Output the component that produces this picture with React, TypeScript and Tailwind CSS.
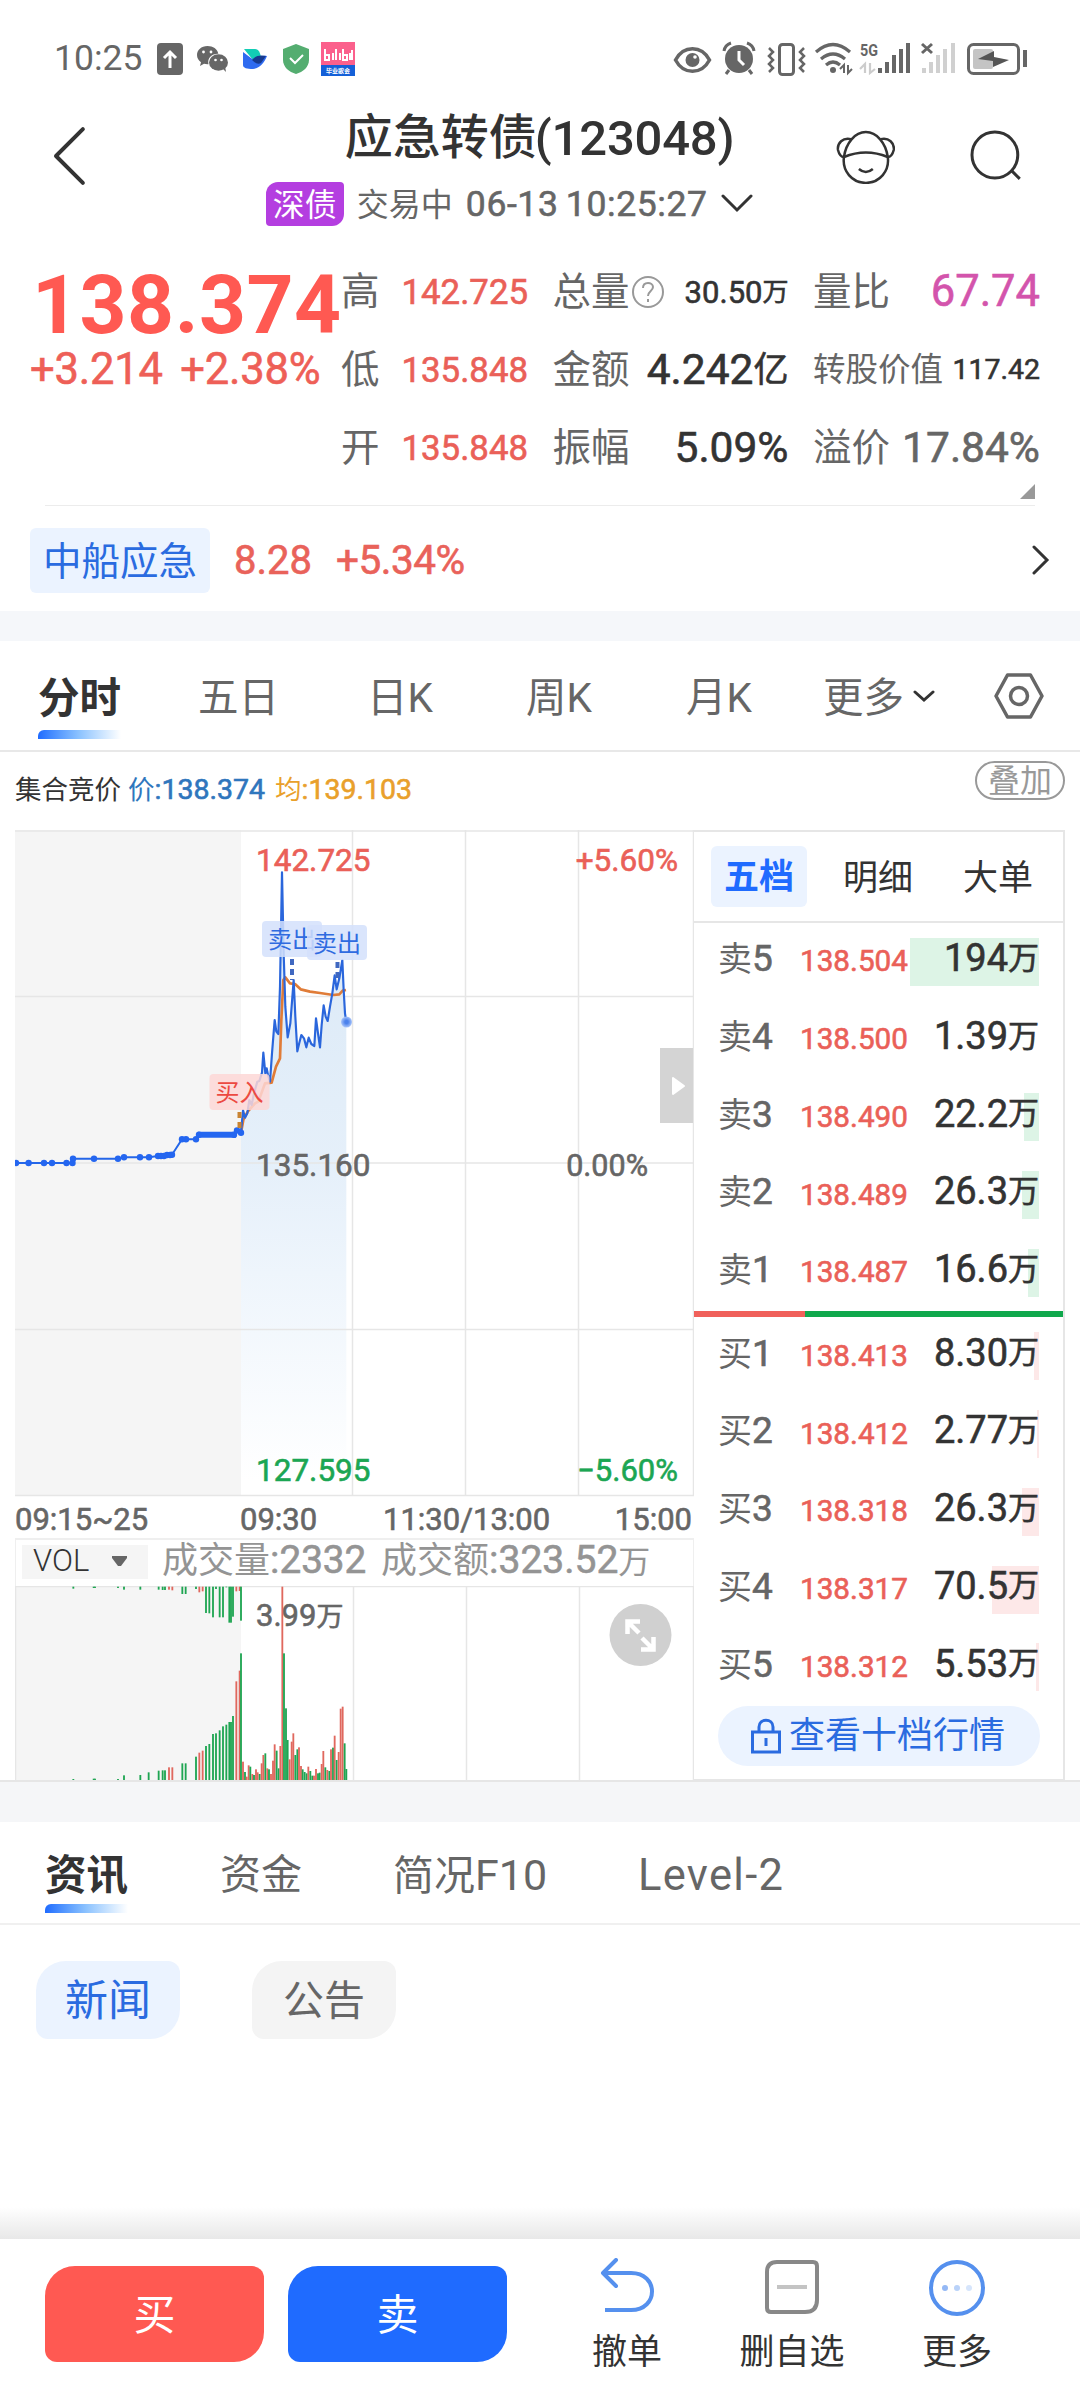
import { clsx } from "clsx";

type Level = { name: string; price: string; volume: string; unit: string; bar: number };
type Bar = [x: number, y: number, color: "r" | "g"];

const sells: Level[] = [
  { name: "卖5", price: "138.504", volume: "194", unit: "万", bar: 129 },
  { name: "卖4", price: "138.500", volume: "1.39", unit: "万", bar: 0 },
  { name: "卖3", price: "138.490", volume: "22.2", unit: "万", bar: 15 },
  { name: "卖2", price: "138.489", volume: "26.3", unit: "万", bar: 17 },
  { name: "卖1", price: "138.487", volume: "16.6", unit: "万", bar: 11 },
];

const buys: Level[] = [
  { name: "买1", price: "138.413", volume: "8.30", unit: "万", bar: 5 },
  { name: "买2", price: "138.412", volume: "2.77", unit: "万", bar: 2 },
  { name: "买3", price: "138.318", volume: "26.3", unit: "万", bar: 17 },
  { name: "买4", price: "138.317", volume: "70.5", unit: "万", bar: 47 },
  { name: "买5", price: "138.312", volume: "5.53", unit: "万", bar: 3 },
];

// thickens the regular digits slightly, between the regular and medium cuts
const semi = "[-webkit-text-stroke:0.6px_currentColor]";

const pricePoints =
  "183,938 189,870 195,893 202,880 208,840 215,855 222,820 232,785 238,783 246,758 250,698 256,760 260,745 264,765 270,785 276,700 284,600 289,635 295,642 300,500 306,157 311,400 316,560 323,652 331,610 341,480 346,590 352,694 358,668 364,645 372,655 379,682 386,653 394,672 403,678 408,595 414,640 420,682 425,615 431,556 437,590 443,603 450,560 457,520 464,466 470,508 478,475 487,420 491,510 495,580 499,606";
const averagePoints =
  "183,938 190,900 203,875 225,850 235,845 255,790 275,788 288,740 300,715 304,600 310,480 316,472 330,490 345,492 362,508 390,515 420,519 460,525 478,523 488,512 498,510";

const auctionDots: [number, number][] = [
  [16, 1163], [28.6, 1163], [44, 1163], [52, 1163], [66.5, 1163], [72.5, 1163],
  [73, 1158.7], [94, 1158.7], [118, 1158.7], [124, 1157.3], [140, 1157.3], [149, 1157.3],
  [158, 1156], [161, 1156], [164, 1156], [167, 1155], [170, 1155], [172, 1154.7],
  [182, 1139.3], [186, 1139.3], [196, 1139.3], [199, 1134.8], [234, 1134.8], [237, 1130.5], [241, 1132.7],
];

const volumeBars: Bar[] = [
  [220, 867, "g"], [281, 866, "g"], [285, 866, "g"], [354, 867, "g"], [372, 856, "g"], [421, 855, "g"],
  [446, 847, "g"], [476, 842, "g"], [488, 841, "g"], [495, 841, "g"], [507, 832, "r"], [517, 832, "r"],
  [547, 820, "g"], [557, 820, "g"], [588, 800, "g"], [598, 788, "r"], [608, 782, "r"], [618, 768, "g"],
  [628, 762, "g"], [639, 732, "g"], [648, 730, "g"], [659, 721, "g"], [669, 709, "g"], [679, 704, "g"],
  [688, 696, "g"], [693, 696, "g"], [699, 678, "g"], [709, 574, "r"], [719, 542, "r"], [723, 490, "g"],
  [729, 815, "r"], [735, 846, "g"], [740, 860, "r"], [746, 826, "r"], [751, 830, "g"], [757, 852, "r"],
  [762, 855, "g"], [768, 838, "r"], [773, 847, "r"], [779, 852, "g"], [785, 820, "r"], [790, 795, "r"],
  [796, 790, "g"], [802, 835, "r"], [807, 838, "g"], [813, 852, "r"], [819, 812, "r"], [824, 763, "r"],
  [830, 782, "g"], [836, 835, "g"], [841, 768, "r"], [847, 290, "r"], [852, 490, "g"], [858, 655, "g"],
  [863, 750, "g"], [869, 808, "r"], [875, 755, "r"], [880, 730, "r"], [886, 795, "g"], [892, 778, "g"],
  [897, 772, "r"], [903, 828, "r"], [908, 838, "g"], [914, 846, "g"], [920, 850, "g"], [925, 830, "r"],
  [931, 843, "g"], [937, 857, "g"], [942, 857, "r"], [948, 837, "r"], [954, 850, "g"], [959, 848, "g"],
  [965, 822, "r"], [970, 783, "r"], [976, 832, "g"], [982, 840, "r"], [988, 843, "g"], [993, 778, "r"],
  [999, 773, "g"], [1004, 737, "r"], [1010, 810, "g"], [1016, 786, "r"], [1022, 656, "r"], [1028, 650, "r"],
  [1034, 760, "g"], [1039, 837, "g"],
];

const hangingBars: Bar[] = [
  [220, 296, "g"], [281, 294, "g"], [285, 294, "g"], [354, 294, "g"], [372, 299, "g"], [421, 299, "g"],
  [476, 299, "g"], [488, 300, "g"], [495, 300, "g"], [507, 299, "r"], [517, 301, "r"], [547, 312, "g"],
  [557, 312, "g"], [588, 297, "g"], [598, 307, "r"], [608, 304, "r"], [618, 369, "g"], [628, 370, "g"],
  [639, 382, "g"], [648, 297, "g"], [659, 382, "g"], [669, 382, "g"], [679, 292, "g"], [688, 398, "g"],
  [693, 398, "g"], [699, 380, "g"], [709, 304, "r"], [719, 303, "r"], [723, 392, "g"],
];

function StatusBar() {
  return (
    <div className="flex h-[118px] items-center pl-[54px] pr-[53px] text-[#666]">
      <span className="w-[103px] text-[35.500px] leading-none">10:25</span>
      <svg className="h-8 w-[26px]" viewBox="0 0 26 32">
        <rect width="26" height="32" rx="4" fill="#666" />
        <path d="M13 25V9M7 15l6-6 6 6" fill="none" stroke="#fff" strokeWidth="3" />
      </svg>
      <svg className="ml-[13px] h-[28px] w-[33px]" viewBox="0 0 33 28" fill="#666">
        <path d="M11.500 1C5.200 1 1 5 1 10c0 3 1.500 5.500 4 7.200L4 21l4-2.200c1.500.4 3 .5 4.500.4C11 13 16 8.500 22.300 8.800 21.500 4 17 1 11.500 1z" />
        <ellipse cx="22.500" cy="17.500" rx="9.500" ry="8.200" />
        <path d="M26 23l4 4-1-6z" />
        <g fill="#fff">
          <circle cx="7.500" cy="7" r="1.400" />
          <circle cx="15" cy="7" r="1.400" />
          <circle cx="19.500" cy="15" r="1.300" />
          <circle cx="25.500" cy="15" r="1.300" />
        </g>
      </svg>
      <svg className="ml-[14px] h-[20px] w-[24px]" viewBox="0 0 24 20">
        <path d="M1 0h11c4 0 5 4 6 8l-8 3z" fill="#12cdb5" />
        <path d="M0 3l12 9c3-5 7-6 12-5-3 7-7 12-14 13C4 20 0 19 0 16z" fill="#2f6bf0" />
        <path d="M9 11c4-5 9-5 14-4l-5 7c-3 2-6 0-9-3z" fill="#173a8f" />
      </svg>
      <svg className="ml-[16px] h-[30px] w-[26px]" viewBox="0 0 26 30">
        <path d="M13 0l13 5v11c0 7-6 12-13 14C6 28 0 23 0 16V5z" fill="#54ad70" />
        <path d="M7 14l5 5 8-8" fill="none" stroke="#fff" strokeWidth="2" />
      </svg>
      <div className="ml-[12px] flex h-[34px] w-[34px] flex-col overflow-hidden bg-[#fb608c] text-white">
        <svg className="h-[23px] w-[34px]" viewBox="0 0 34 23" fill="none" stroke="#fff" strokeWidth="2">
          <path d="M4 7v11h4v-5H4M12 11v7M15 7v11M19 11v7M22 7v11h4v-5h-4M29 11v7M31 8v10" />
        </svg>
        <div className="flex flex-1 items-center justify-center bg-[#1460d8] text-[6px] font-bold leading-none">毕业歌会</div>
      </div>

      <svg className="ml-auto h-[36px] w-[354px]" viewBox="674 42 354 36" fill="none" stroke="#666">
        <path d="M676.500 61c8-15 26-15 34 0-8 15-26 15-34 0z" strokeWidth="3.500" />
        <circle cx="693.500" cy="61" r="7" fill="#666" stroke="none" />
        <circle cx="696" cy="58" r="1.800" fill="#fff" stroke="none" />
        <circle cx="740" cy="60" r="14" fill="#666" stroke="none" />
        <path d="M725 52q1-6 7-8M755 52q-1-6-7-8M730 71l-3 4M750 71l3 4" strokeWidth="3" />
        <path d="M740 52v9l5 5" stroke="#fff" strokeWidth="3" />
        <rect x="780.500" y="45.500" width="14" height="30" rx="3" strokeWidth="3" />
        <path d="M770 49l4 4-4 4 4 4-4 4 4 4-4 4M805 49l-4 4 4 4-4 4 4 4-4 4 4 4" strokeWidth="2.500" />
        <path d="M817 53q17-15 34 0M822 60q12-10 24 0M827 66q7-6 14 0" strokeWidth="3.200" />
        <circle cx="834" cy="71" r="3" fill="#666" stroke="none" />
        <path d="M841 70l4-4v8M849 66v8l4-4" strokeWidth="2" />
        <path d="M861 70l5-5v9M871 64v10l5-4" stroke="#ccc" strokeWidth="2.200" />
        <path d="M881 69v5M888 63v11M895 56v18M902 50v24M909 44v30" strokeWidth="4" />
        <path d="M923 45l10 9M933 45l-10 9" strokeWidth="3" />
        <path d="M925 69v5M932 63v11M939 56v18M946 50v24M954 44v30" stroke="#d0d0d0" strokeWidth="4" />
        <rect x="969.500" y="45.500" width="50" height="29" rx="5" strokeWidth="3" />
        <rect x="974" y="50" width="20" height="20" rx="2" fill="#c4c4c4" stroke="none" />
        <path d="M1026 51v17" strokeWidth="4" />
        <path d="M979 60l16-8v6l15 3-16 7v-6z" fill="#555" stroke="none" />
        <text x="861" y="57" fontSize="17" fontWeight="700" textLength="18" lengthAdjust="spacingAndGlyphs" fill="#666" stroke="none">
          5G
        </text>
      </svg>
    </div>
  );
}

function Header() {
  return (
    <header className="flex h-[122px] pl-[53px] pr-[56px]">
      <svg className="mt-[8px] h-[60px] w-[34px]" viewBox="0 0 34 60" fill="none" stroke="#333" strokeWidth="4" strokeLinecap="round" strokeLinejoin="round">
        <path d="M30 3L3 30l27 27" />
      </svg>
      <div className="ml-[179px] w-[490px]">
        <h1 className="ml-[79px] flex h-[40px] items-center whitespace-nowrap text-[48px] font-medium leading-none text-[#333]">
          应急转债<span className="-ml-[2px] text-[49px] tracking-[-0.2px]">(123048)</span>
        </h1>
        <div className="mt-[24px] flex h-[44px] items-center text-[32px] leading-none text-[#666]">
          <span className="flex h-[44px] w-[78px] items-center justify-center rounded-[4px] rounded-br-[12px] rounded-tl-[12px] bg-[#b43ee0] pt-[2px] text-white">
            深债
          </span>
          <span className="ml-[13px] w-[109px] pt-[2px]">交易中</span>
          <span className={clsx("w-[241px] whitespace-nowrap pt-[2px] text-[35.500px] tracking-[0.600px] [word-spacing:-2px]", semi)}>06-13 10:25:27</span>
          <svg className="ml-[14px] h-[20px] w-[32px]" viewBox="0 0 32 20" fill="none" stroke="#333" strokeWidth="3" strokeLinecap="round">
            <path d="M2 2l14 14L30 2" />
          </svg>
        </div>
      </div>
      <svg className="ml-[82px] mt-[12px] h-[54px] w-[60px]" viewBox="0 0 60 54" fill="none" stroke="#333" strokeWidth="2.500">
        <path d="M8 27C10 13 19 2 30 2s20 11 22 25" />
        <path d="M8 27q22-9 44 0c2 14-8 26-22 26S6 41 8 27z" />
        <path d="M15 9C7 7 1 13 2 20c1 4 3 7 6 7M45 9c8-2 14 4 13 11-1 4-3 7-6 7M23 39q7 6 14 0" />
      </svg>
      <svg className="ml-[75px] mt-[10px] h-[54px] w-[54px]" viewBox="0 0 54 54" fill="none" stroke="#333" strokeWidth="3">
        <circle cx="25" cy="27" r="23" />
        <path d="M42 43l8 8" />
      </svg>
    </header>
  );
}

function Stat({ label, value, className, labelClass }: { label: string; value: React.ReactNode; className?: string; labelClass?: string }) {
  return (
    <div className="flex items-center justify-between whitespace-nowrap">
      <span className={clsx("text-[#666]", labelClass ?? "text-[38.500px]")}>{label}</span>
      <span className={clsx("flex items-center", semi, className)}>{value}</span>
    </div>
  );
}

function Quote() {
  return (
    <section className="relative ml-[30px] mr-[40px] flex h-[266px] pt-[13px] leading-none">
      <div className="w-[311px] text-[#ff5952]">
        <div className="mt-[14px] h-[76px] pl-[2px] text-[82px] font-bold leading-[76px] tracking-[0.500px]">138.374</div>
        <div className={clsx("mt-[5px] h-[44px] whitespace-nowrap text-[43.500px] leading-[44px] tracking-[-0.2px] text-[#ee5f57] [word-spacing:7px]", semi)}>
          +3.214 +2.38%
        </div>
      </div>
      <div className="grid h-[234px] w-[699px] grid-cols-[187px_236px_227px] grid-rows-3 justify-between">
        <Stat label="高" value="142.725" className="text-[34.800px] text-[#ea6058]" />
        <div className="flex items-center whitespace-nowrap">
          <span className="text-[38.500px] text-[#666]">总量</span>
          <svg className="ml-[2px] size-[32px]" viewBox="0 0 32 32" fill="none" stroke="#999" strokeWidth="2">
            <circle cx="16" cy="16" r="15" />
            <path d="M11 12c0-7 10-6 10-1 0 4-5 4-5 9M16 23v3" />
          </svg>
          <span className={clsx("ml-auto flex items-center text-[31px] text-[#333]", semi)}>
            30.50<span className="text-[26px]">万</span>
          </span>
        </div>
        <Stat label="量比" value="67.74" className="text-[43.500px] text-[#d354ac]" />
        <Stat label="低" value="135.848" className="text-[34.800px] text-[#ea6058]" />
        <Stat label="金额" value={<>4.242<span className="text-[35px]">亿</span></>} className="text-[42.500px] text-[#333]" />
        <Stat label="转股价值" value="117.42" labelClass="text-[32.500px]" className="text-[28.500px] text-[#333]" />
        <Stat label="开" value="135.848" className="text-[34.800px] text-[#ea6058]" />
        <Stat label="振幅" value="5.09%" className="text-[42.500px] text-[#333]" />
        <Stat label="溢价" value="17.84%" className="text-[42.500px] text-[#666]" />
      </div>
      <svg className="absolute right-[5px] top-[244px] size-[15px]" viewBox="0 0 15 15">
        <path d="M15 0v15H0z" fill="#999" />
      </svg>
    </section>
  );
}

function RelatedStock() {
  return (
    <div className="flex h-[105px] items-center pl-[30px] pr-[30px] leading-none">
      <span className="mt-1 flex h-[65px] w-[180px] items-center justify-center rounded-[6px] bg-[#ebf3ff] pt-[3px] text-[38.500px] text-[#2a6be0]">中船应急</span>
      <span className={clsx("ml-[24px] w-[102px] pt-[4px] text-[40px] text-[#e9625a]", semi)}>8.28</span>
      <span className={clsx("pt-[4px] text-[40.500px] tracking-[-0.5px] text-[#e9625a]", semi)}>+5.34%</span>
      <svg className="ml-auto mt-[2px] h-[30px] w-[18px]" viewBox="0 0 18 30" fill="none" stroke="#333" strokeWidth="3" strokeLinecap="round">
        <path d="M2 2l13 13L2 28" />
      </svg>
    </div>
  );
}

function PeriodTabs() {
  return (
    <nav className="flex h-[111px] items-center border-b-2 border-[#e8e8e8] pl-[38px] pt-[6px] text-[40.500px] leading-none text-[#666]">
      <div className="relative w-[160px] text-[41.500px] font-bold text-[#333]">
        分时
        <div className="absolute left-0 top-[52px] h-[9px] w-[83px] rounded-tl-[6px] bg-gradient-to-r from-[#1f6bff] via-[#8dc3ff] to-white" />
      </div>
      <span className="w-[169px]">五日</span>
      <span className="w-[159px]">日K</span>
      <span className="w-[160px]">周K</span>
      <span className="w-[137px]">月K</span>
      <span className="flex w-[170px] items-center">
        更多
        <svg className="-mt-[6px] ml-[9px] h-[12px] w-[22px]" viewBox="0 0 22 12" fill="none" stroke="#333" strokeWidth="3" strokeLinecap="round">
          <path d="M2 2l9 8 9-8" />
        </svg>
      </span>
      <svg className="-mt-[6px] ml-[1px] h-[46px] w-[50px]" viewBox="0 0 50 46" fill="none" stroke="#666" strokeWidth="3.500">
        <path d="M13.500 2h23L48 23 36.500 44h-23L2 23z" strokeLinejoin="round" />
        <circle cx="25" cy="23" r="8.500" />
      </svg>
    </nav>
  );
}

function PriceChart() {
  return (
    <svg className="block h-[667px] w-[679px]" viewBox="15 830 679 667">
      <defs>
        <linearGradient id="area" x1="0" y1="870" x2="0" y2="1480" gradientUnits="userSpaceOnUse">
          <stop offset="0" stopColor="#d9e8f6" />
          <stop offset="0.500" stopColor="#e6f0fa" />
          <stop offset="0.660" stopColor="#eef5fc" />
          <stop offset="1" stopColor="#fff" />
        </linearGradient>
        <radialGradient id="glow">
          <stop offset="0.300" stopColor="#4c82ec" />
          <stop offset="1" stopColor="#a9c5fa" />
        </radialGradient>
        <clipPath id="under">
          <polygon transform="translate(180 820) scale(.33333)" points={`183,2020 ${pricePoints} 499,2020`} />
        </clipPath>
      </defs>
      <rect x="15" y="830" width="226" height="666" fill="#f5f5f5" />
      <rect x="241" y="860" width="106" height="634" fill="url(#area)" clipPath="url(#under)" />
      <path d="M15 831H694M15 996.500H694M15 1163H694M15 1329.500H694M15 1495.500H694M352.500 830V1496M465.500 830V1496M578.500 830V1496M693.500 830V1496" stroke="#e6e6e6" strokeWidth="1.500" fill="none" />
      <g fontSize="31.500" strokeWidth="0.600">
        <text x="256" y="871" fill="#ea6058" stroke="#ea6058">142.725</text>
        <text x="678" y="871" textAnchor="end" fill="#ea6058" stroke="#ea6058">+5.60%</text>
        <text x="256" y="1176" fill="#666" stroke="#666">135.160</text>
        <text x="648" y="1176" textAnchor="end" fontSize="30.500" fill="#666" stroke="#666">0.00%</text>
        <text x="256" y="1481" fill="#1ba653" stroke="#1ba653">127.595</text>
        <text x="678" y="1481" textAnchor="end" fontSize="31" fill="#1ba653" stroke="#1ba653">−5.60%</text>
      </g>
      <g fill="none" strokeLinejoin="round" transform="translate(180 820) scale(.33333)">
        <polyline points={averagePoints} stroke="#e07c38" strokeWidth="8" />
        <polyline points={pricePoints} stroke="#2a66dc" strokeWidth="6.500" />
      </g>
      <polyline points={auctionDots.map((p) => p.join(",")).join(" ")} fill="none" stroke="#2466e8" strokeWidth="2" />
      <path d="M198 1134.800H236" stroke="#2466f0" strokeWidth="6" />
      {auctionDots.map(([x, y]) => (
        <circle key={`${x}-${y}`} cx={x} cy={y} r="3.200" fill="#2466f0" />
      ))}
      <path d="M292 959v21M337.500 962v18" stroke="#4068c0" strokeWidth="4" strokeDasharray="6 4" />
      <path d="M239.500 1112v20" stroke="#c98433" strokeWidth="4" strokeDasharray="6 4" />
      <circle cx="346.500" cy="1022" r="5.500" fill="url(#glow)" />
      <g fontSize="24">
        <rect x="262" y="921" width="60" height="36" rx="4" fill="#d3e1fc" fillOpacity="0.850" />
        <text x="268" y="948" fill="#2f6be0">卖出</text>
        <rect x="307" y="925" width="60" height="35" rx="4" fill="#d3e1fc" fillOpacity="0.850" />
        <text x="313" y="952" fill="#2f6be0">卖出</text>
        <rect x="209.500" y="1074" width="60" height="36" rx="4" fill="#fdd7d6" fillOpacity="0.850" />
        <text x="215.500" y="1101" fill="#ec4a42">买入</text>
      </g>
      <rect x="660" y="1048" width="33" height="75" fill="#d4d4d4" />
      <path d="M673 1078l11 8-11 8z" fill="#fff" stroke="#fff" strokeWidth="2" strokeLinejoin="round" />
    </svg>
  );
}

function VolumeChart() {
  return (
    <svg className="block h-[194px] w-[679px]" viewBox="15 1586 679 194">
      <rect x="15" y="1586" width="226" height="194" fill="#f5f5f5" />
      <path d="M15.500 1586V1780M353.500 1586V1780M466.500 1586V1780M579.500 1586V1780M693.500 1586V1780M15 1586.500H694" stroke="#e6e6e6" strokeWidth="1.500" />
      <text x="256" y="1626" fontSize="31" fill="#666" stroke="#666" strokeWidth="0.600">3.99<tspan fontSize="27">万</tspan></text>
      <g transform="translate(0 1490) scale(.33333)">
        {volumeBars.map(([x, y, c]) => (
          <rect key={x} x={x - 2.75} y={y} width="5.500" height={870 - y} fill={c === "r" ? "#e0685e" : "#1fa552"} />
        ))}
        {hangingBars.map(([x, y, c]) => (
          <rect key={x} x={x - 2.75} y="290" width="5.500" height={y - 290} fill={c === "r" ? "#e0685e" : "#1fa552"} />
        ))}
      </g>
      <circle cx="640.500" cy="1635" r="31" fill="#d0d0d0" />
      <path d="M639 1633l-11-11M627.500 1634v-12.500h12.500M642 1638l11 11M653.500 1637v12.500h-12.500" fill="none" stroke="#fff" strokeWidth="4.500" />
    </svg>
  );
}

function ChartPanel() {
  return (
    <div className="w-[679px]">
      <PriceChart />
      <div className={clsx("flex h-[41px] items-center whitespace-nowrap pr-[2px] pt-[3px] text-[31px] leading-none text-[#666]", semi)}>
        <span className="w-[225px]">09:15~25</span>
        <span className="w-[143px]">09:30</span>
        <span className="w-[170px]">11:30/13:00</span>
        <span className="ml-auto">15:00</span>
      </div>
      <div className="flex h-[48px] items-center whitespace-nowrap border-x border-t-2 border-[#efefef] pb-[5px] text-[36px] leading-none text-[#949494]">
        <span className="ml-[6px] mt-[3px] flex h-[34px] w-[126px] items-center bg-[#f5f5f5] pb-[4px] pl-[11px] text-[31px] font-light text-[#333]">
          VOL
          <svg className="ml-[22px] mt-[3px] h-[11px] w-[17px]" viewBox="0 0 17 11">
            <path d="M1 0h15v2l-6 8H7L1 2z" fill="#666" />
          </svg>
        </span>
        <span className="ml-[14px] w-[219px]">
          成交量<span className={clsx("text-[38.700px]", semi)}>:2332</span>
        </span>
        <span>
          成交额<span className={clsx("text-[39px]", semi)}>:323.52</span>
          <span className="text-[32px]">万</span>
        </span>
      </div>
      <VolumeChart />
    </div>
  );
}

function LevelRow({ level, side }: { level: Level; side: "sell" | "buy" }) {
  return (
    <div className="relative flex h-[77.700px] items-center whitespace-nowrap pl-[24px] pr-[24px] leading-none">
      <div
        className={clsx("absolute right-[24px] top-[15px] h-[48px]", side === "sell" ? "bg-[#ddf4e6]" : "bg-[#fde8e8]")}
        style={{ width: level.bar }}
      />
      <span className="relative w-[82px] pb-[6px] text-[34px] text-[#666]">
        {level.name[0]}
        <span className={clsx("text-[37px]", semi)}>{level.name[1]}</span>
      </span>
      <span className={clsx("relative pb-[1px] text-[29.700px] text-[#ea6058]", semi)}>{level.price}</span>
      <span className={clsx("relative ml-auto flex items-center pb-[7px] text-[38px] text-[#333]", semi)}>
        {level.volume}
        <span className="text-[31px]">{level.unit}</span>
      </span>
    </div>
  );
}

function OrderBook() {
  return (
    <div className="h-[951px] w-[371px] border-2 border-l-0 border-[#e6e6e6]">
      <div className="flex h-[91px] items-center border-b-2 border-[#e6e6e6] pl-[17px] text-[35px] leading-none text-[#333]">
        <span className="flex h-[61px] w-[96px] items-center justify-center rounded-[6px] bg-[#ebf3ff] pt-[2px] font-bold text-[#1f6bff]">五档</span>
        <span className="ml-[36px] pt-[3px]">明细</span>
        <span className="ml-[50px] pt-[3px]">大单</span>
      </div>
      {sells.map((l) => (
        <LevelRow key={l.name} level={l} side="sell" />
      ))}
      <div className="flex h-[6px]">
        <div className="w-[111px] bg-[#f0605a]" />
        <div className="flex-1 bg-[#0fa84c]" />
      </div>
      {buys.map((l) => (
        <LevelRow key={l.name} level={l} side="buy" />
      ))}
      <div className="ml-[24px] flex h-[60px] w-[322px] items-center rounded-full bg-[#ebf3ff] pl-[33px] pt-[1px] text-[36px] leading-none text-[#2a6be0]">
        <svg className="mr-[8px] h-[36px] w-[30px]" viewBox="0 0 30 36" fill="none" stroke="#2a6be0" strokeWidth="3">
          <rect x="1.500" y="14" width="27" height="20" />
          <path d="M8 14V9c0-9 14-9 14 0v5M15 20v8" />
        </svg>
        查看十档行情
      </div>
    </div>
  );
}

function NewsSection() {
  return (
    <section className="h-[417px] overflow-hidden">
      <nav className="flex h-[103px] items-center border-b-2 border-[#f0f0f0] pl-[45px] pt-[6px] text-[41px] leading-none text-[#666]">
        <div className="relative w-[175px] text-[41.500px] font-bold text-[#333]">
          资讯
          <div className="absolute left-0 top-[49px] h-[9px] w-[83px] rounded-tl-[6px] bg-gradient-to-r from-[#1f6bff] via-[#8dc3ff] to-white" />
        </div>
        <span className="w-[173px]">资金</span>
        <span className="w-[245px]">
          简况<span className="text-[43px]">F10</span>
        </span>
        <span className="text-[43.500px] tracking-[1.300px]">Level-2</span>
      </nav>
      <div className="flex gap-[72px] pl-[36px] pt-[36px] leading-none">
        <span className="flex h-[78px] w-[144px] items-center justify-center rounded-[12px] rounded-br-[30px] rounded-tl-[30px] bg-[#ebf3ff] pt-[3px] text-[43px] text-[#2a6be0]">新闻</span>
        <span className="flex h-[78px] w-[144px] items-center justify-center rounded-[12px] rounded-br-[30px] rounded-tl-[30px] bg-[#f4f4f4] pt-[3px] text-[41px] text-[#666]">公告</span>
      </div>
      <div className="mt-[168px] h-[32px] bg-gradient-to-b from-white to-[#e8e8e8]" />
    </section>
  );
}

function BottomBar() {
  return (
    <footer className="flex h-[149px] bg-white pl-[45px] pt-[27px] leading-none text-[#333]">
      <button className="h-[96px] w-[219px] rounded-[12px] rounded-br-[30px] rounded-tl-[30px] bg-[#ff5952] pt-[3px] text-[42px] text-white">买</button>
      <button className="ml-[24px] h-[96px] w-[219px] rounded-[12px] rounded-br-[30px] rounded-tl-[30px] bg-[#1f6bff] pt-[3px] text-[42px] text-white">卖</button>
      <div className="-mt-[8px] flex flex-1 text-[35px]">
        <div className="ml-[60px] flex w-[120px] flex-col items-center">
          <svg className="h-[58px] w-[54px]" viewBox="0 0 54 58" fill="none" stroke="#5590ee" strokeWidth="4">
            <path d="M16 2L3 15l13 13" strokeLinejoin="round" strokeLinecap="round" />
            <path d="M3 15h28c28 0 28 37 0 37H5" />
          </svg>
          <span className="mt-[19px]">撤单</span>
        </div>
        <div className="ml-[45px] flex w-[120px] flex-col items-center">
          <svg className="h-[58px] w-[54px]" viewBox="0 0 54 58" fill="none" stroke="#888" strokeWidth="4">
            <path d="M12 4h36q4 0 4 4v34q0 12-12 12H6q-4 0-4-4V14Q2 4 12 4z" />
            <path d="M12 29h30" stroke="#c4c4c4" />
          </svg>
          <span className="mt-[19px]">删自选</span>
        </div>
        <div className="ml-[45px] flex w-[120px] flex-col items-center">
          <svg className="h-[58px] w-[58px]" viewBox="0 0 58 58" fill="none" stroke="#5590ee" strokeWidth="4">
            <circle cx="29" cy="30" r="26" />
            <g stroke="none">
              <circle cx="17" cy="30" r="3" fill="#94b8f5" />
              <circle cx="29" cy="30" r="3" fill="#b9d2f9" />
              <circle cx="41" cy="30" r="3" fill="#d6e5fc" />
            </g>
          </svg>
          <span className="mt-[19px]">更多</span>
        </div>
      </div>
    </footer>
  );
}

export default function App() {
  return (
    <div className="h-[2388px] w-[1080px] overflow-hidden bg-white font-['Roboto','Noto_Sans_CJK_SC',sans-serif]">
      <StatusBar />
      <Header />
      <Quote />
      <div className="ml-[45px] mr-[45px] -mt-px h-px bg-[#ececec]" />
      <RelatedStock />
      <div className="h-[30px] bg-[#f5f7fa]" />
      <PeriodTabs />
      <div className="flex h-[78px] items-start pl-[15px] pr-[15px] pt-[9px] leading-none">
        <div className="flex h-[58px] items-center whitespace-nowrap text-[26.500px]">
          <span className="mr-[7px] text-[#333]">集合竞价</span>
          <span className="mr-[10px] text-[#2f76bd]">
            价<span className={clsx("text-[28.500px]", semi)}>:138.374</span>
          </span>
          <span className="text-[#e9a02b]">
            均<span className={clsx("text-[28.500px]", semi)}>:139.103</span>
          </span>
        </div>
        <span className="ml-auto flex h-[39px] w-[90px] items-center justify-center rounded-full border-2 border-[#999] text-[32px] text-[#999]">叠加</span>
      </div>
      <div className="flex h-[952px] border-b-2 border-[#e6e6e6] pl-[15px]">
        <ChartPanel />
        <OrderBook />
      </div>
      <div className="h-[40px] bg-[#f5f6f8]" />
      <NewsSection />
      <BottomBar />
    </div>
  );
}
